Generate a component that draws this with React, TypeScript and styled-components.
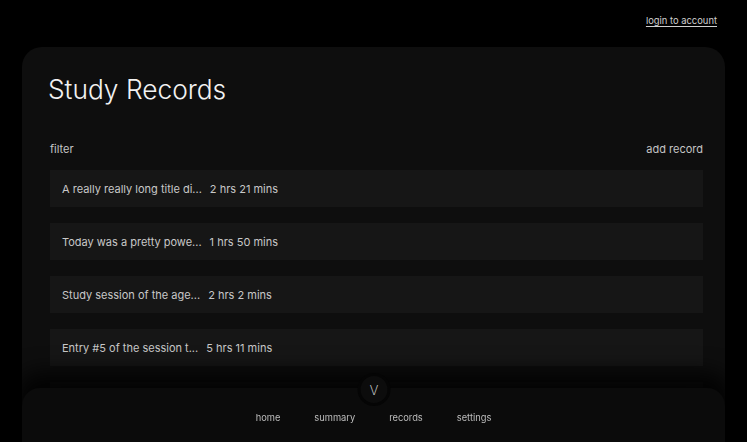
import React from "react";
import styled, { createGlobalStyle } from "styled-components";

const Global = createGlobalStyle`
  html, body { margin: 0; padding: 0; background: #000; height: 100%; overflow: hidden; }
  body { font-family: Inter, "Noto Sans", sans-serif; color: #ddd; }
  #root { height: 100%; }
`;

const Page = styled.div`
  height: 100%;
  display: flex;
  flex-direction: column;
`;

const TopBar = styled.header`
  height: 47px;
  display: flex;
  justify-content: flex-end;
  align-items: flex-start;
  padding: 15px 30px 0 0;
  box-sizing: border-box;
  flex-shrink: 0;
`;

const LoginLink = styled.a`
  font-size: 9.4px;
  color: #cfcfcf;
  text-decoration: underline;
  text-underline-offset: 2px;
  cursor: pointer;
`;

const Card = styled.main`
  margin: 0 22px;
  flex: 1;
  min-height: 480px;
  background: #0e0e0e;
  border-radius: 20px;
  padding: 26px 22px 0 28px;
  box-sizing: border-box;
`;

const Title = styled.h1`
  margin: 0 0 0 -2px;
  font-size: 26.3px;
  font-weight: 300;
  color: #f2f2f2;
  line-height: 34px;
`;

const Toolbar = styled.div`
  margin-top: 34px;
  display: flex;
  justify-content: space-between;
  align-items: center;
  height: 16px;
`;

const ToolButton = styled.span`
  font-size: 11px;
  color: #c4c4c4;
  cursor: pointer;
`;

const List = styled.ul`
  list-style: none;
  margin: 13px 0 0;
  padding: 0;
  display: flex;
  flex-direction: column;
  gap: 16px;
`;

const Row = styled.li`
  height: 37px;
  background: #161616;
  display: flex;
  align-items: center;
  padding: 0 12px;
  gap: 8px;
  font-size: 11px;
  color: #c8c8c8;
`;

const RowTitle = styled.span`
  white-space: nowrap;
`;

const RowTime = styled.span`
  white-space: nowrap;
`;

const Nav = styled.nav`
  position: fixed;
  left: 22px;
  right: 22px;
  top: 388px;
  height: 80px;
  background: #0b0b0b;
  border-radius: 18px 18px 0 0;
  box-shadow: 0 -10px 22px 6px rgba(0, 0, 0, 0.85);
  display: flex;
  justify-content: center;
  align-items: flex-start;
  padding-top: 24px;
  box-sizing: border-box;
  gap: 34px;
`;

const NavItem = styled.a`
  font-size: 9.3px;
  color: #bdbdbd;
  cursor: pointer;
`;

const Toggle = styled.button`
  position: absolute;
  top: -15px;
  left: 50%;
  transform: translateX(-50%);
  width: 33px;
  height: 33px;
  border-radius: 50%;
  background: #0c0c0c;
  border: 3px solid #050505;
  box-sizing: border-box;
  color: #e4e4e4;
  font-family: Inter, sans-serif;
  font-weight: 200;
  font-size: 13px;
  display: flex;
  align-items: center;
  justify-content: center;
  padding: 0 0 0 1px;
  cursor: pointer;
`;

const records = [
  { title: "A really really long title di...", time: "2 hrs 21 mins" },
  { title: "Today was a pretty powe...", time: "1 hrs 50 mins" },
  { title: "Study session of the age...", time: "2 hrs 2 mins" },
  { title: "Entry #5 of the session t...", time: "5 hrs 11 mins" },
  { title: "Another session entry...", time: "1 hrs 5 mins" },
];

export default function App() {
  return (
    <>
      <Global />
      <Page>
        <TopBar>
          <LoginLink>login to account</LoginLink>
        </TopBar>
        <Card>
          <Title>Study Records</Title>
          <Toolbar>
            <ToolButton>filter</ToolButton>
            <ToolButton>add record</ToolButton>
          </Toolbar>
          <List>
            {records.map((r, i) => (
              <Row key={i}>
                <RowTitle>{r.title}</RowTitle>
                <RowTime>{r.time}</RowTime>
              </Row>
            ))}
          </List>
        </Card>
        <Nav>
          <Toggle>V</Toggle>
          <NavItem>home</NavItem>
          <NavItem>summary</NavItem>
          <NavItem>records</NavItem>
          <NavItem>settings</NavItem>
        </Nav>
      </Page>
    </>
  );
}
